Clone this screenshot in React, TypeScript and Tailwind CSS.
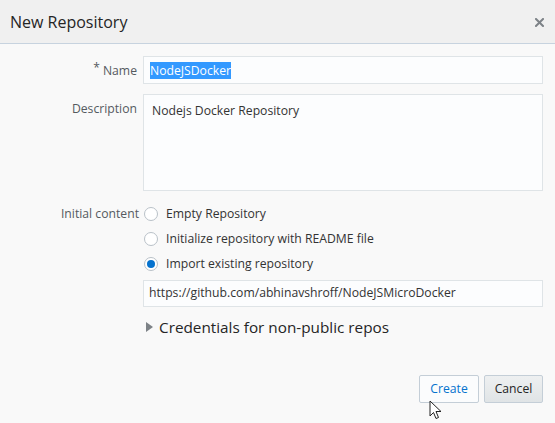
import React from "react";

function Radio({ checked }: { checked?: boolean }) {
  return (
    <span className="flex h-[14px] w-[14px] items-center justify-center rounded-full border border-[#b9c1c8] bg-white">
      {checked && <span className="h-[8px] w-[8px] rounded-full bg-[#0572ce]" />}
    </span>
  );
}

export default function App() {
  const font = { fontFamily: '"Open Sans", "Noto Sans", sans-serif' };
  return (
    <div className="relative h-[423px] w-[555px] overflow-hidden bg-[#f9f9f9] text-[12.2px] text-[#333]" style={font}>
      <div className="flex h-[44px] items-center justify-between border-b border-[#c7d3df] bg-[#f0f0f0] pl-[10px] pr-[10px]">
        <span className="text-[16px] text-[#252525]">New Repository</span>
        <svg width="9" height="9" viewBox="0 0 9 9" className="mr-[1px] mt-[2px]">
          <path d="M1 1L8 8M8 1L1 8" stroke="#7d8287" strokeWidth="2" strokeLinecap="square" />
        </svg>
      </div>
      <div className="pr-[12px] pt-[12px]">
        <div className="grid grid-cols-[143px_400px] gap-y-[10px]">
          <label className="flex h-[28px] items-center justify-end pr-[6px] pt-[2px] text-[#555a5f]">
            <span className="mr-[3px] -mt-[6px] text-[12px]">*</span>Name
          </label>
          <div className="flex h-[28px] items-center border border-[#dfe4e7] bg-[#fcfdfe] pl-[6px]">
            <span className="bg-[#3399ff] text-white leading-[17px]">NodeJSDocker</span>
          </div>
          <label className="flex h-[30px] items-center justify-end pr-[6px] text-[#555a5f]">Description</label>
          <div className="h-[97px] border border-[#dfe4e7] bg-[#fcfdfe] pl-[8px] pt-[7px]">Nodejs Docker Repository</div>
        </div>
        <div className="mt-[13px] grid grid-cols-[143px_400px]">
          <label className="flex h-[20px] items-center justify-end pr-[4px] text-[#555a5f]">Initial content</label>
          <div className="flex flex-col">
            <div className="flex h-[20px] items-center gap-[8px] pl-[1px]">
              <Radio />
              <span>Empty Repository</span>
            </div>
            <div className="mt-[5px] flex h-[20px] items-center gap-[8px] pl-[1px]">
              <Radio />
              <span>Initialize repository with README file</span>
            </div>
            <div className="mt-[5px] flex h-[20px] items-center gap-[8px] pl-[1px]">
              <Radio checked />
              <span>Import existing repository</span>
            </div>
            <div className="mt-[6px] flex h-[27px] items-center border border-[#dfe4e7] bg-[#fcfdfe] pl-[5px]">
              https://github.com/abhinavshroff/NodeJSMicroDocker
            </div>
            <div className="mt-[9px] flex items-center gap-[6px] pl-[3px] text-[15.3px] text-[#252525]">
              <svg width="7" height="10" viewBox="0 0 7 10">
                <path d="M0 0L7 5L0 10Z" fill="#7d8287" />
              </svg>
              <span>Credentials for non-public repos</span>
            </div>
          </div>
        </div>
        <div className="mt-[36px] flex justify-end gap-[5px]">
          <button className="h-[28px] w-[60px] rounded-[2px] border border-[#c4ced7] bg-[#fbfcfd] text-[#0572ce]">Create</button>
          <button className="h-[28px] w-[59px] rounded-[2px] border border-[#c4ced7] bg-gradient-to-b from-[#eef0f1] to-[#e0e4e6] text-[#252525]">Cancel</button>
        </div>
      </div>
      <svg className="absolute left-[429px] top-[400px]" width="13" height="20" viewBox="0 0 13 20">
        <path d="M1 1L1 16L4.5 12.5L7 18.5L9.5 17.5L7 11.5L12 11.5Z" fill="white" stroke="#222" strokeWidth="1" strokeLinejoin="round" />
      </svg>
    </div>
  );
}
